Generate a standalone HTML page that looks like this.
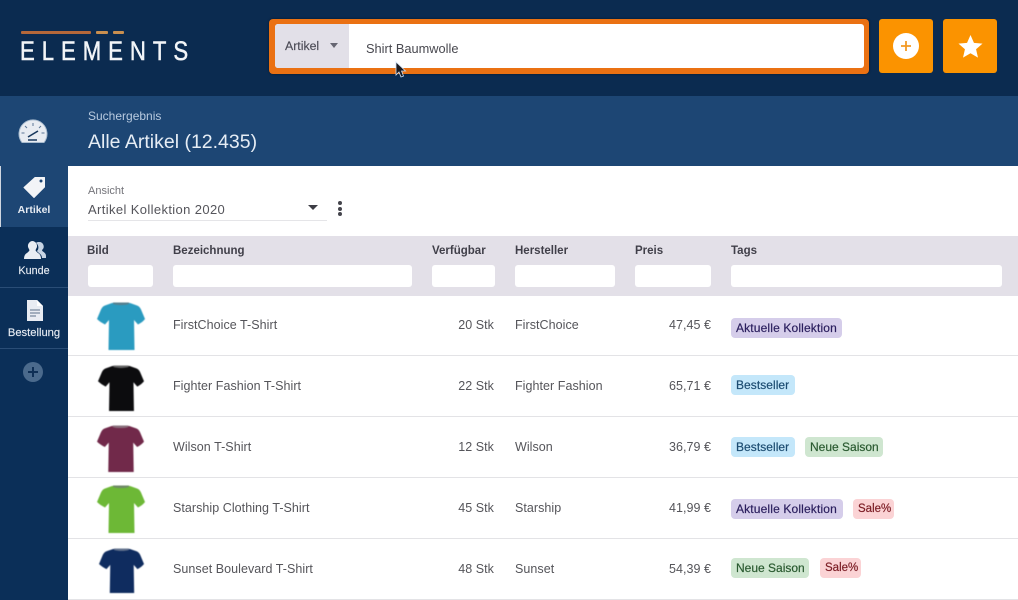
<!DOCTYPE html>
<html lang="de">
<head>
<meta charset="utf-8">
<title>Elements</title>
<style>
html,body{margin:0;padding:0;width:1018px;height:600px;overflow:hidden;background:#fff;font-family:"Liberation Sans",sans-serif;color:#444}
.a{position:absolute;white-space:nowrap}
#top{left:0;top:0;width:1018px;height:96px;background:#0b2b50}
#sub{left:0;top:96px;width:1018px;height:70px;background:#1d4674}
#side{left:0;top:166px;width:68px;height:434px;background:#0b2f58}
#act{left:0;top:166px;width:68px;height:61px;background:#1d4674;border-left:1px solid #cfd6e0;box-sizing:border-box}
.sl{left:0;width:68px;height:1px;background:#2a4d76}
.nav{left:0;width:68px;text-align:center;color:#e6ebf2;font-size:10.800px;-webkit-text-stroke:.15px #e6ebf2}
.th{font-size:11.500px;font-weight:700;color:#403f49;top:245px}
.in{top:265px;height:22px;background:#fff;border-radius:3px}
.t{font-size:12.500px;color:#55555a;letter-spacing:.05px;transform:translateY(1px)}
.r{text-align:right}
.rule{left:68px;width:950px;height:1px;background:#e3e3e6}
.tag{height:20px;line-height:20px;border-radius:4px;font-size:12px;padding:0 5px;box-sizing:border-box;-webkit-text-stroke:.2px currentColor}
.p{background:#d5cdea;color:#2b1f5e;letter-spacing:.15px}
.b{background:#c4e7fa;color:#1d4d72;letter-spacing:.05px}
.g{background:#cfe6d0;color:#2a5a30}
.s{background:#fbd3d5;color:#7c1d25;font-size:11.500px}
.shirt{filter:blur(.4px)}
</style>
</head>
<body>
<div class="a" id="top"></div>
<div class="a" id="sub"></div>
<div class="a" id="side"></div>
<div class="a" id="act"></div>

<!-- Logo -->
<div class="a" style="left:21px;top:31px;width:70px;height:3px;background:#b5683a;border-radius:1px"></div>
<div class="a" style="left:96px;top:31px;width:12px;height:3px;background:#c98f4f;border-radius:1px"></div>
<div class="a" style="left:113px;top:31px;width:11px;height:3px;background:#c98f4f;border-radius:1px"></div>
<div class="a" style="left:20px;top:37px;color:#f2f5f8;font-size:27px;line-height:28px;letter-spacing:8.500px;-webkit-text-stroke:.5px #f2f5f8;transform-origin:0 0;transform:scaleX(.82)">ELEMENTS</div>

<!-- Search -->
<div class="a" style="left:269px;top:19px;width:600px;height:55px;background:#ea7113;border-radius:4px;box-shadow:0 0 2px rgba(0,0,0,.5)"></div>
<div class="a" style="left:275px;top:24px;width:589px;height:44px;background:#fff;border-radius:3px"></div>
<div class="a" style="left:275px;top:24px;width:74px;height:44px;background:#e2e0e8;border-radius:3px 0 0 3px"></div>
<div class="a" style="left:285px;top:39px;font-size:12.300px;line-height:15px;color:#4a4a55;-webkit-text-stroke:.15px #4a4a55">Artikel</div>
<div class="a" style="left:330px;top:43px;width:0;height:0;border-left:4.500px solid transparent;border-right:4.500px solid transparent;border-top:5px solid #666672"></div>
<div class="a" style="left:366px;top:41px;font-size:12.800px;line-height:15px;color:#48484f">Shirt Baumwolle</div>
<svg class="a" style="left:394px;top:61px" width="14" height="18" viewBox="0 0 14 18"><path d="M2 1v13l3-3 2 5 2.500-1-2-5h4z" fill="#1a1a20" stroke="#cfe0f5" stroke-width=".8"/></svg>

<!-- Buttons -->
<div class="a" style="left:879px;top:19px;width:54px;height:54px;background:#fb9300;border-radius:3px"></div>
<svg class="a" style="left:893px;top:33px" width="26" height="26" viewBox="0 0 26 26"><circle cx="13" cy="13" r="13" fill="#fff"/><path d="M13 8v10M8 13h10" stroke="#f39a24" stroke-width="1.800"/></svg>
<div class="a" style="left:943px;top:19px;width:54px;height:54px;background:#fb9300;border-radius:3px"></div>
<svg class="a" style="left:958px;top:34px" width="25" height="24" viewBox="0 0 26 25"><path d="M13 1l3.600 8.200 8.900.8-6.700 5.900 2 8.700L13 20.100l-7.800 4.500 2-8.700L.5 10l8.900-.8z" fill="#fff"/></svg>

<!-- Sub header -->
<div class="a" style="left:88px;top:109px;font-size:12px;line-height:15px;color:#b9cbe0">Suchergebnis</div>
<div class="a" style="left:88px;top:131px;font-size:19.500px;line-height:22px;color:#e6edf5">Alle Artikel (12.435)</div>

<!-- Sidebar -->
<svg class="a" style="left:18px;top:119px" width="30" height="25" viewBox="0 0 30 25"><path d="M4 23.500A14 14 0 1 1 26 23.500z" fill="#e8ecf2" stroke="#a9bccf" stroke-width="1"/><path d="M10 18l10-6" stroke="#17375c" stroke-width="1.600"/><path d="M10 21h9" stroke="#17375c" stroke-width="1.500"/><path d="M15 4v3M7 7l2 2M23 7l-2 2M3.500 14h3M23.500 14h3" stroke="#5b7696" stroke-width="1"/></svg>
<svg class="a" style="left:23px;top:176px" width="23" height="22" viewBox="0 0 23 22"><path d="M12 1.500h9.500v9.500L11 21.500 1 11.500z" fill="#f2f4f7" stroke="#f2f4f7" stroke-linejoin="round"/><circle cx="18" cy="5" r="1.500" fill="#1d4674"/></svg>
<div class="a nav" style="top:204px;font-weight:700;font-size:10.500px;-webkit-text-stroke:0">Artikel</div>
<svg class="a" style="left:24px;top:240px" width="22" height="20" viewBox="0 0 22 20"><path d="M15 2a4.500 4.500 0 0 1 3 8c0 2 4 2 4 6v2h-4c0-4-4-5-5-7 2-2 2-6-1-8 1-1 2-1 3-1z" fill="#c7d4e4"/><path d="M8 1a5 5 0 0 1 4 8c-1 2 0 2 2 4 2 1 3 3 3 6H0c0-3 1-5 3-6 2-2 3-2 2-4a5 5 0 0 1 3-8z" fill="#e9edf3"/></svg>
<div class="a nav" style="top:265px">Kunde</div>
<div class="a sl" style="top:287px"></div>
<svg class="a" style="left:27px;top:300px" width="16" height="21" viewBox="0 0 16 21"><path d="M0 0h10l6 6v15H0z" fill="#e8ecf3"/><path d="M10 0l6 6h-6z" fill="#fff"/><path d="M3 10h10M3 13h10M3 16h6" stroke="#5d6f88" stroke-width="1"/></svg>
<div class="a nav" style="top:327px;font-size:11.200px">Bestellung</div>
<div class="a sl" style="top:348px"></div>
<svg class="a" style="left:23px;top:362px" width="20" height="20" viewBox="0 0 20 20"><circle cx="10" cy="10" r="10" fill="#4b6a8c"/><path d="M10 5v10M5 10h10" stroke="#0f2f55" stroke-width="2"/></svg>

<!-- View selector -->
<div class="a" style="left:88px;top:184px;font-size:11px;line-height:14px;color:#74747a">Ansicht</div>
<div class="a" style="left:88px;top:202px;font-size:13px;line-height:16px;color:#55555b;letter-spacing:.37px">Artikel Kollektion 2020</div>
<div class="a" style="left:308px;top:205px;width:0;height:0;border-left:5px solid transparent;border-right:5px solid transparent;border-top:5px solid #3d3d45"></div>
<div class="a" style="left:88px;top:220px;width:239px;height:1px;background:#e5e5e8"></div>
<div class="a" style="left:338px;top:201px;width:4px;height:4px;border-radius:50%;background:#44444c"></div>
<div class="a" style="left:338px;top:206.500px;width:4px;height:4px;border-radius:50%;background:#44444c"></div>
<div class="a" style="left:338px;top:212px;width:4px;height:4px;border-radius:50%;background:#44444c"></div>

<!-- Table header -->
<div class="a" style="left:68px;top:236px;width:950px;height:60px;background:#e3e0e8"></div>
<div class="a th" style="left:87px">Bild</div>
<div class="a th" style="left:173px">Bezeichnung</div>
<div class="a th" style="left:432px">Verfügbar</div>
<div class="a th" style="left:515px">Hersteller</div>
<div class="a th" style="left:635px">Preis</div>
<div class="a th" style="left:731px">Tags</div>
<div class="a in" style="left:88px;width:65px"></div>
<div class="a in" style="left:173px;width:239px"></div>
<div class="a in" style="left:432px;width:63px"></div>
<div class="a in" style="left:515px;width:100px"></div>
<div class="a in" style="left:635px;width:76px"></div>
<div class="a in" style="left:731px;width:271px"></div>

<!-- Shirts -->
<svg width="0" height="0" style="position:absolute"><defs><path id="sh" d="M15 1h18l7 2.500c2 .8 3 2 4 4l4 9.500c-1.500 2-4 4-7 5.500l-4-4.500 .5 30H11.500l.5-30-4 4.500C5 21 2 19 0 17l4-9.500c1-2 2-3.200 4-4z"/><path id="co" d="M16 .5h16v1.500c-4 1.500-12 1.500-16 0z"/></defs></svg>
<svg class="a shirt" style="left:97px;top:302px" width="48" height="48" viewBox="0 0 48 48"><use href="#sh" fill="#2a9bc0"/><use href="#co" fill="#55808f"/></svg>
<svg class="a shirt" style="left:98px;top:364px" width="46" height="48" viewBox="0 0 48 48"><use href="#sh" fill="#0c0c0e"/><use href="#co" fill="#666"/></svg>
<svg class="a shirt" style="left:97px;top:425px" width="47" height="47" viewBox="0 0 48 48"><use href="#sh" fill="#71294a"/><use href="#co" fill="#8a707c"/></svg>
<svg class="a shirt" style="left:97px;top:485px" width="48" height="48" viewBox="0 0 48 48"><use href="#sh" fill="#6db836"/><use href="#co" fill="#6f8a66"/></svg>
<svg class="a shirt" style="left:99px;top:546px" width="45" height="49" viewBox="0 0 48 48"><use href="#sh" fill="#0f2c5f"/><use href="#co" fill="#66758f"/></svg>

<!-- Row 1 -->
<div class="a t" style="left:173px;top:317px">FirstChoice T-Shirt</div>
<div class="a t r" style="left:432px;width:62px;top:317px">20 Stk</div>
<div class="a t" style="left:515px;top:317px">FirstChoice</div>
<div class="a t r" style="left:635px;width:76px;top:317px">47,45 €</div>
<div class="a tag p" style="left:731px;top:318px;width:111px">Aktuelle Kollektion</div>
<div class="a rule" style="top:355px"></div>

<!-- Row 2 -->
<div class="a t" style="left:173px;top:378px">Fighter Fashion T-Shirt</div>
<div class="a t r" style="left:432px;width:62px;top:378px">22 Stk</div>
<div class="a t" style="left:515px;top:378px">Fighter Fashion</div>
<div class="a t r" style="left:635px;width:76px;top:378px">65,71 €</div>
<div class="a tag b" style="left:731px;top:375px;width:64px">Bestseller</div>
<div class="a rule" style="top:416px"></div>

<!-- Row 3 -->
<div class="a t" style="left:173px;top:439px">Wilson T-Shirt</div>
<div class="a t r" style="left:432px;width:62px;top:439px">12 Stk</div>
<div class="a t" style="left:515px;top:439px">Wilson</div>
<div class="a t r" style="left:635px;width:76px;top:439px">36,79 €</div>
<div class="a tag b" style="left:731px;top:437px;width:64px">Bestseller</div>
<div class="a tag g" style="left:805px;top:437px;width:78px">Neue Saison</div>
<div class="a rule" style="top:477px"></div>

<!-- Row 4 -->
<div class="a t" style="left:173px;top:500px">Starship Clothing T-Shirt</div>
<div class="a t r" style="left:432px;width:62px;top:500px">45 Stk</div>
<div class="a t" style="left:515px;top:500px">Starship</div>
<div class="a t r" style="left:635px;width:76px;top:500px">41,99 €</div>
<div class="a tag p" style="left:731px;top:499px;width:112px">Aktuelle Kollektion</div>
<div class="a tag s" style="left:853px;top:499px;width:41px">Sale%</div>
<div class="a rule" style="top:538px"></div>

<!-- Row 5 -->
<div class="a t" style="left:173px;top:561px">Sunset Boulevard T-Shirt</div>
<div class="a t r" style="left:432px;width:62px;top:561px">48 Stk</div>
<div class="a t" style="left:515px;top:561px">Sunset</div>
<div class="a t r" style="left:635px;width:76px;top:561px">54,39 €</div>
<div class="a tag g" style="left:731px;top:558px;width:78px">Neue Saison</div>
<div class="a tag s" style="left:820px;top:558px;width:41px">Sale%</div>
<div class="a rule" style="top:599px"></div>
</body>
</html>
